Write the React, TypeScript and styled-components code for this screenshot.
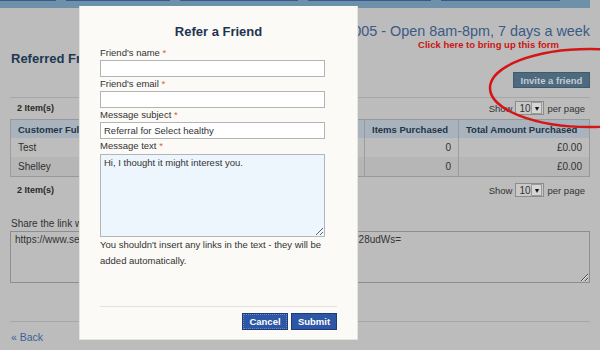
import React from "react";
import styled, { createGlobalStyle } from "styled-components";

const GlobalStyle = createGlobalStyle`
  html, body {
    margin: 0;
    background: #bcbcbc;
  }
  body {
    font-family: "Liberation Sans", Arial, sans-serif;
    color: #2f2f2f;
  }
`;

const Page = styled.div`
  position: relative;
  width: 600px;
  height: 350px;
  overflow: hidden;
`;

const NavStrip = styled.div`
  display: flex;
  gap: 10px;
  width: 590px;
  height: 8px;
  background: #6c91a8;
`;

const NavTab = styled.div<{ $w: number }>`
  width: ${(p) => p.$w}px;
  height: 1px;
  background: #3a5890;
`;

const Content = styled.div`
  display: flex;
  flex-direction: column;
  padding: 0 10px;
  width: 580px;
`;

const Hotline = styled.div`
  margin-top: 15px;
  text-align: right;
  font-size: 14.4px;
  line-height: 16px;
  color: #3b5a86;
  white-space: nowrap;
`;

const Hint = styled.div`
  padding-right: 31px;
  text-align: right;
  font-size: 9.5px;
  font-weight: bold;
  line-height: 12px;
  color: #cc1414;
`;

const Title = styled.h2`
  margin: 0 0 0 1px;
  font-size: 13px;
  line-height: 15px;
  color: #1d3850;
`;

const ActionRow = styled.div`
  display: flex;
  justify-content: flex-end;
  margin-top: 6px;
`;

const InviteButton = styled.button`
  width: 77px;
  height: 16px;
  padding: 0;
  border: 1px solid #3f5a6d;
  background: #4e6a7e;
  color: #c3cbd3;
  font-family: inherit;
  font-size: 9.5px;
  font-weight: bold;
`;

const Divider = styled.div<{ $top: number }>`
  margin-top: ${(p) => p.$top}px;
  height: 1px;
  background: #a7a7a7;
`;

const Pager = styled.div<{ $top: number }>`
  display: flex;
  justify-content: space-between;
  align-items: center;
  height: 16px;
  margin-top: ${(p) => p.$top}px;
  font-size: 9px;
`;

const ItemCount = styled.span`
  padding-left: 7px;
  font-weight: bold;
  color: #2a2a2a;
`;

const PageSize = styled.div`
  display: flex;
  align-items: center;
  gap: 3px;
  padding-right: 5px;
  font-size: 9.5px;
  color: #333;
`;

const SizeBox = styled.span`
  display: flex;
  align-items: center;
  justify-content: space-between;
  box-sizing: border-box;
  width: 29px;
  height: 14px;
  padding: 0 1px 0 3px;
  border: 1px solid #8c8c8c;
  background: #c9c9c9;
  font-size: 10px;
`;

const SizeArrow = styled.span`
  display: flex;
  align-items: center;
  justify-content: center;
  width: 9px;
  height: 10px;
  background: #d6d6d6;
  border: 1px solid #9a9a9a;
  font-size: 7px;
  color: #111;
`;

const Table = styled.table`
  width: 580px;
  margin-top: 3px;
  border-collapse: collapse;
  border: 1px solid #999;
  font-size: 10px;
`;

const Th = styled.th<{ $w?: number }>`
  width: ${(p) => (p.$w ? `${p.$w}px` : "auto")};
  height: 18px;
  padding: 0 7px;
  background: #a8b3bd;
  border-left: 1px solid #999;
  text-align: left;
  font-size: 9.5px;
  color: #1f3447;
  white-space: nowrap;
`;

const Row = styled.tr<{ $alt?: boolean }>`
  background: ${(p) => (p.$alt ? "#b6b6b6" : "#bdbdbd")};
`;

const Td = styled.td<{ $num?: boolean }>`
  height: 19px;
  padding: 0 7px;
  border-left: 1px solid #9d9d9d;
  text-align: ${(p) => (p.$num ? "right" : "left")};
  color: #303030;
`;

const ShareLabel = styled.div`
  margin: 19px 0 0 1px;
  font-size: 10px;
  line-height: 13px;
  color: #333;
`;

const ShareBox = styled.textarea`
  box-sizing: border-box;
  width: 580px;
  height: 52px;
  margin-top: 1px;
  padding: 2px 4px;
  border: 1px solid #8e8e8e;
  background: #bcbcbc;
  font-family: inherit;
  font-size: 10px;
  color: #333;
  resize: vertical;
`;

const BackLink = styled.a`
  margin: 9px 0 0 1px;
  font-size: 10.5px;
  color: #3c5e9c;
  text-decoration: none;
`;

const Circle = styled.svg`
  position: absolute;
  left: 480px;
  top: 40px;
`;

const Modal = styled.div`
  position: absolute;
  left: 79px;
  top: 6px;
  display: flex;
  flex-direction: column;
  box-sizing: border-box;
  width: 279px;
  height: 334px;
  padding: 0 20px;
  background: #fbfaf6;
  border: 1px solid #e6e3da;
  border-top: none;
`;

const ModalTitle = styled.h3`
  margin: 18px 0 6px;
  text-align: center;
  font-size: 13px;
  line-height: 16px;
  color: #1e3450;
`;

const Label = styled.label`
  display: block;
  font-size: 9.5px;
  line-height: 14px;
  color: #333;
`;

const Req = styled.span`
  color: #e0603c;
`;

const TextInput = styled.input`
  display: block;
  box-sizing: border-box;
  width: 225px;
  height: 17px;
  margin: 0;
  padding: 0 3px;
  border: 1px solid #b4b4b4;
  background: #fff;
  font-family: inherit;
  font-size: 9.5px;
  color: #333;
`;

const MessageBox = styled.textarea`
  display: block;
  box-sizing: border-box;
  width: 225px;
  height: 83px;
  margin: 1px 0 0;
  padding: 2px 3px;
  border: 1px solid #b0b6bc;
  background: #edf5fd;
  font-family: inherit;
  font-size: 9.5px;
  color: #333;
  resize: vertical;
`;

const Help = styled.p`
  width: 228px;
  margin: 0;
  font-size: 9.5px;
  line-height: 16px;
  color: #333;
`;

const Footer = styled.div`
  display: flex;
  justify-content: flex-end;
  gap: 3px;
  margin-top: auto;
  padding: 6px 0 9px;
  border-top: 1px solid #e4e2dc;
`;

const ModalButton = styled.button<{ $focus?: boolean }>`
  width: 46px;
  height: 17px;
  padding: 0;
  border: 1px solid #1d3b78;
  background: #2d56a4;
  color: #fff;
  font-family: inherit;
  font-size: 9.5px;
  font-weight: bold;
  outline: ${(p) => (p.$focus ? "1px dotted #6d89c4" : "none")};
  outline-offset: -2px;
`;

const tabs = [56, 104, 118, 123, 119];

const rows = [
  { name: "Test", email: "", items: 0, total: "£0.00" },
  { name: "Shelley", email: "", items: 0, total: "£0.00" },
];

const PagerBar: React.FC<{ top: number }> = ({ top }) => (
  <Pager $top={top}>
    <ItemCount>2 Item(s)</ItemCount>
    <PageSize>
      <span>Show</span>
      <SizeBox>
        10<SizeArrow>▼</SizeArrow>
      </SizeBox>
      <span>per page</span>
    </PageSize>
  </Pager>
);

export default function App() {
  return (
    <Page>
      <GlobalStyle />
      <NavStrip>
        {tabs.map((w, i) => (
          <NavTab key={i} $w={w} />
        ))}
      </NavStrip>
      <Content>
        <Hotline>Call 0800 005 - Open 8am-8pm, 7 days a week</Hotline>
        <Hint>Click here to bring up this form</Hint>
        <Title>Referred Friends</Title>
        <ActionRow>
          <InviteButton>Invite a friend</InviteButton>
        </ActionRow>
        <Divider $top={9} />
        <PagerBar top={2} />
        <Table>
          <thead>
            <tr>
              <Th>Customer Full Name</Th>
              <Th $w={110}>Referral Email</Th>
              <Th $w={79}>Items Purchased</Th>
              <Th $w={116}>Total Amount Purchased</Th>
            </tr>
          </thead>
          <tbody>
            {rows.map((r, i) => (
              <Row key={r.name} $alt={i % 2 === 1}>
                <Td>{r.name}</Td>
                <Td>{r.email}</Td>
                <Td $num>{r.items}</Td>
                <Td $num>{r.total}</Td>
              </Row>
            ))}
          </tbody>
        </Table>
        <PagerBar top={5} />
        <ShareLabel>Share the link with your friends:</ShareLabel>
        <ShareBox
          readOnly
          defaultValue="https://www.selecthealthy.co.uk/refer?code=U2VsZWN0SGVhbHRoeQAbCd728udWs="
        />
        <Divider $top={38} />
        <BackLink href="#">« Back</BackLink>
      </Content>

      <Circle width="140" height="100" viewBox="0 0 140 100">
        <ellipse
          cx="110"
          cy="48"
          rx="100"
          ry="39"
          fill="none"
          stroke="#d51616"
          strokeWidth="2.5"
        />
      </Circle>

      <Modal>
        <ModalTitle>Refer a Friend</ModalTitle>
        <Label>
          Friend's name <Req>*</Req>
        </Label>
        <TextInput />
        <Label>
          Friend's email <Req>*</Req>
        </Label>
        <TextInput />
        <Label>
          Message subject <Req>*</Req>
        </Label>
        <TextInput defaultValue="Referral for Select healthy" />
        <Label>
          Message text <Req>*</Req>
        </Label>
        <MessageBox defaultValue="Hi, I thought it might interest you." />
        <Help>
          You shouldn't insert any links in the text - they will be added
          automatically.
        </Help>
        <Footer>
          <ModalButton $focus>Cancel</ModalButton>
          <ModalButton>Submit</ModalButton>
        </Footer>
      </Modal>
    </Page>
  );
}
